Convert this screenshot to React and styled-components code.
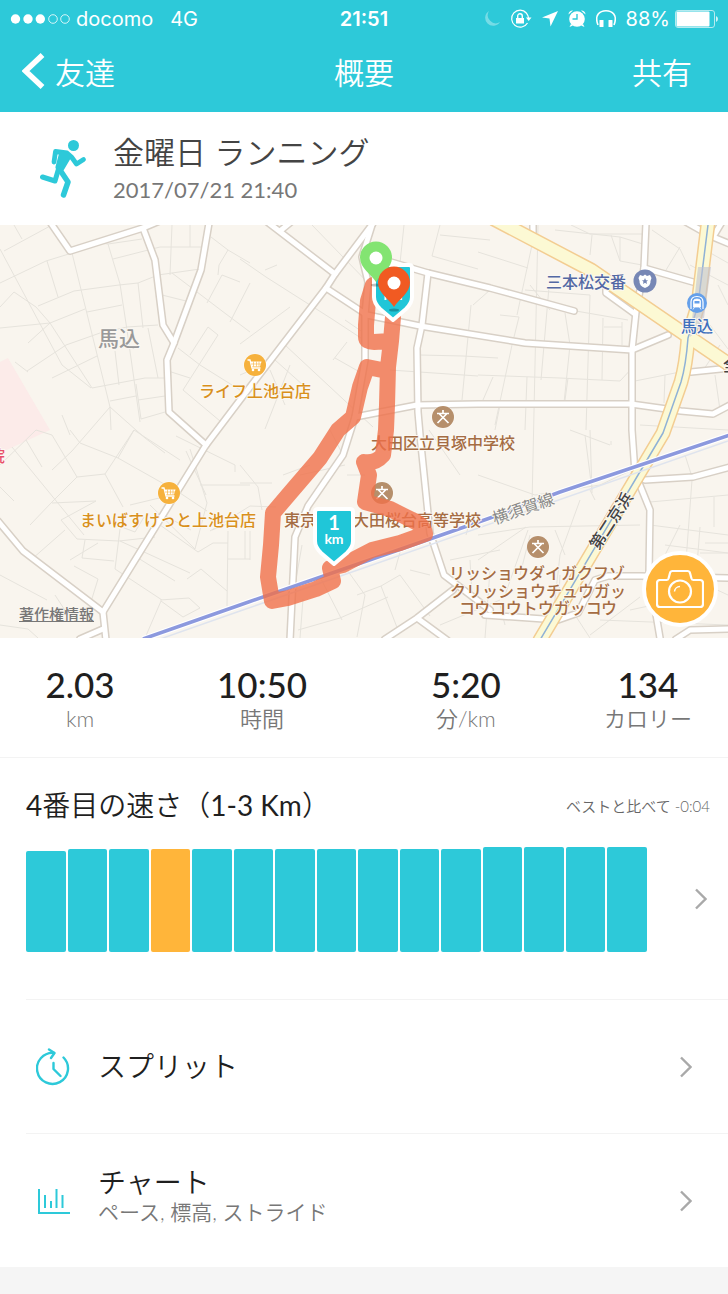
import styled, { createGlobalStyle } from 'styled-components'

const teal = '#2dc9d9'
const orange = '#ffb53a'

/* pace blocks, value = height in px, best = the highlighted one */
const blocks = [
  { value: 101 }, { value: 103 }, { value: 103 }, { value: 103, best: true },
  { value: 103 }, { value: 103 }, { value: 103 }, { value: 103 },
  { value: 103 }, { value: 103 }, { value: 103 },
  { value: 105 }, { value: 105 }, { value: 105 }, { value: 105 },
]

const stats = [
  { value: '2.03', label: 'km' },
  { value: '10:50', label: '時間' },
  { value: '5:20', label: '分/km' },
  { value: '134', label: 'カロリー' },
]

const lanes = [
  'M0 24L62 140L91 163M14 0L22 14M4 26L52 0M0 58L46 36L72 28L100 18L108 19L142 14M0 82L14 67L36 82L50 98L92 163L145 153L165 153',
  'M38 81L74 66L119 60L138 58L158 50L200 44M108 19L120 59L127 105L140 197M72 28L110 182L111 205M47 36L58 72M87 87L122 80M113 34L160 22L201 22',
  'M0 103L50 98L85 84M28 118L50 98M27 146L66 120L100 108L127 102L158 100M52 153L97 131M148 103L158 153M138 58L143 103M115 126L119 160M15 137L28 147',
  'M170 50L172 0M162 70L186 76M172 48L226 89L250 107M230 97L250 58M207 78L222 50L240 57M218 50L219 40L228 25L211 12M228 25L250 38M190 0V22',
  'M110 176L136 171M136 159L141 194L165 187M138 175L165 171M110 182L72 226L52 245M110 182L145 213L165 228M62 190L70 210M165 145L190 153M190 130L208 102L218 110L183 165L220 196',
  'M178 123L200 140L240 165M0 240L36 205L52 210L77 252L52 277L30 300M12 222L84 310M26 215L42 242M0 262L14 276M70 205L80 218L118 233L180 268M105 249L134 205M105 249L123 282M77 252L105 249M118 233L134 205L180 235',
  'M52 278L96 276L61 295M61 295L77 314L119 316L155 312M85 315L82 333L114 336M120 304L115 344L162 375M74 341L98 354L90 380M65 305L32 334M120 316L190 348M138 333L175 356M119 301L135 307L144 292M130 280L180 268L207 286',
  'M176 211L235 240V247M190 224L207 278L195 324L150 280M200 260H250M160 300L198 327L213 318H228M228 306L227 381M187 354L201 344L227 366M228 334H250M245 306V334M160 375L189 373L200 383L183 392L161 376L145 413M70 335L98 318M47 375L0 350M55 370L68 390M0 400L28 404L38 413M212 305L250 290M186 226L206 270M162 289L191 305',
  'M210 306L250 281L276 282M240 240L258 262L262 285M240 258H272M250 306V335M283 250L310 240M302 320L295 360M345 342L365 370L357 412M357 370L381 361L398 405M381 361L400 350L430 391M320 352L342 395M298 405L340 393L388 372M303 374L300 413M300 300L316 290M312 0L375 65M240 34L266 52L332 94L367 117M265 45L277 40M240 119L290 82M285 120L373 202M345 95L367 110M333 135L347 117M265 204L290 140M240 150L275 135L303 160M270 145L285 180M335 133L365 150',
  'M400 38L404 0M432 31L440 0M432 31L478 44M440 10L490 15M473 80L490 65M471 80L462 175M420 130L463 131L498 133M390 145L478 151M429 205L460 250M330 205L343 230M347 250H365M300 250L345 240M395 345L402 320M410 345L430 350M450 335L500 325M470 335L472 370M466 310L470 295M440 400L500 375',
  'M478 27L528 43M525 65L590 70M500 90L519 92L512 120L495 200M483 175L493 152M532 20L517 90M549 62L541 155M555 5L620 12L646 20M592 10L590 30M611 10L620 36L642 40M620 12V36M590 70L586 205M565 88L570 120L564 178M603 93L602 155M628 95L570 85M622 97V120M604 102H622M550 85L530 60M571 0L590 9H644M652 5L680 24L690 45M680 22L663 50M478 150L560 153L620 156L635 140M527 152L525 205M568 153L565 175M635 156L680 147M665 150L664 178M690 40L728 60M700 22L728 38M718 60L728 80M710 100L728 124M715 150L720 185M640 200L728 205M700 150L720 120M500 180L495 205',
  'M538 0L532 280M478 250L535 270L600 260L632 245M590 205L592 268M570 205L610 220M611 216V220M585 210L592 265M478 310L530 302L640 300M526 302L478 335M555 305L565 330M528 305L505 370M530 310L520 350M590 265L595 275M580 275L560 330L552 400M685 230L692 252M692 255L685 350M650 277L728 270M714 272V302M650 300L728 310M700 302L697 340M705 318H728M700 328H728M685 350L728 370M665 320L728 328M630 385L700 370M600 395L728 400M490 345L485 413M560 350L558 390M500 380L505 400M575 390L590 413M680 300L660 340M590 410L640 372',
]

const streets = [
  'M50 -3L70 26L143 3L162 -5',
  'M143 3L155 35L163 100L174 118',
  'M209 -2L201 45L174 118L167 135L169 187L206 220',
  'M374 -3L335 49L326 63L240 175L206 220L103 387L106 415',
  'M-2 296L23 326L103 387M103 404L80 414',
  'M266 -4L335 49M291 -3L280 6M326 63L367 90L420 101L525 118L632 125L668 110',
  'M372 0L362 32L368 57L365 90L365 135L355 192L343 230L308 281L295 312L290 415',
  'M384 35L428 48L490 63L574 86',
  'M428 48L422 100L417 123L418 187L420 210L430 308L444 350L490 385',
  'M355 192L417 180L478 179H631L681 186L713 189L730 180',
  'M646 -2L644 43L636 87L632 125V205L635 248L650 285L649 348L660 413',
  'M644 43L693 57M606 60V68L635 89M691 147L730 143M686 -3L702 6M722 -3L713 12L730 19M533 -2V10',
  'M385 414L417 393L453 365M417 393L447 415',
  'M485 390L558 395L578 388L595 355L608 351H641L730 353',
  'M645 255L693 252L730 242M676 414L690 405L730 404',
]

const highways = [
  'M494 -6L591 45L686 110L730 140',
  'M708 -2L698 80L688 113Q686 140 681 157L663 208L641 245L540 415',
]

const route = 'M373 60L368 76L366 100L366 112Q366 117 374 117L391 116M393 92L391 116L388 142L387 180L386 205L383 230Q375 239 364 237L369 250L365 277L390 284L412 295Q424 300 425 309L400 318L372 325L343 340L330 343L333 356L316 364L288 373L272 376L268 352L271 320L273 288L290 268L320 233L338 205L353 192L360 162L367 142L387 146'

const places = [
  { x: 586, y: 63, text: '三本松交番', color: '#5368a4' },
  { x: 697, y: 107, text: '馬込', color: '#3f6fbd' },
  { x: 255, y: 172, text: 'ライフ上池台店', color: '#d9901c' },
  { x: 168, y: 301, text: 'まいばすけっと上池台店', color: '#d9901c' },
  { x: 443, y: 224, text: '大田区立貝塚中学校', color: '#a56c43' },
  { x: 300, y: 301, text: '東京', color: '#a56c43' },
  { x: 417, y: 301, text: '大田桜台高等学校', color: '#a56c43' },
  { x: 537, y: 354, text: 'リッショウダイガクフゾ', color: '#a56c43' },
  { x: 538, y: 372, text: 'クリッショウチュウガッ', color: '#a56c43' },
  { x: 538, y: 389, text: 'コウコウトウガッコウ', color: '#a56c43' },
]

const Chevron = () => (
  <svg width="12" height="22" viewBox="0 0 12 22" fill="none" stroke="#a9a9a9" strokeWidth="2.4">
    <path d="M1 1.5L10.5 11L1 20.5" />
  </svg>
)

const Cart = ({ x, y }) => (
  <g transform={`translate(${x} ${y})`}>
    <circle r="11.5" fill="#fff" opacity="0.6" />
    <circle r="11" fill="#f6b13c" />
    <path d="M-7.500 -5H-5L-3 3H5.500" fill="none" stroke="#fff" strokeWidth="1.300" />
    <path d="M-4.500 -3.500H6.500L5 1.500H-3.500Z" fill="#fff" />
    <path d="M-1.500 -3.500V1.500M1.500 -3.500V1.500M4 -3.500V1.500M-4 -1H6" stroke="#f6b13c" strokeWidth="0.600" />
    <circle cx="-2" cy="5" r="1.300" fill="#fff" />
    <circle cx="4" cy="5" r="1.300" fill="#fff" />
  </g>
)

const School = ({ x, y }) => (
  <g transform={`translate(${x} ${y})`}>
    <circle r="11.5" fill="#fff" opacity="0.6" />
    <circle r="11" fill="#b68f6b" />
    <path d="M0 -7V-4M-6 -3.500H6M-3.500 -3L5.500 6M3.500 -3L-5.500 6" fill="none" stroke="#fff" strokeWidth="1.700" />
  </g>
)

const Pin = ({ x, y, fill }) => (
  <g transform={`translate(${x} ${y})`}>
    <ellipse cy="27" rx="5" ry="1.500" fill="#000" opacity="0.25" />
    <path d="M0 24C-5 16 -16 10 -16 -0.500A16 16 0 0 1 16 -0.500C16 10 5 16 0 24Z" fill={fill} />
    <circle r="6.500" fill="#fff" />
  </g>
)

const Shield = ({ x, y, km }) => (
  <g transform={`translate(${x} ${y})`}>
    <path
      d="M-16 -27H16Q19 -27 19 -24V5Q19 11 13 17L0 28L-13 17Q-19 11 -19 5V-24Q-19 -27 -16 -27Z"
      fill="#20c6d8" stroke="#fff" strokeWidth="4" strokeLinejoin="round"
    />
    <PinText y="-6" $size={20}>{km}</PinText>
    <PinText y="8" $size={14}>km</PinText>
  </g>
)

const RunMap = () => (
  <MapDrawing viewBox="0 0 728 413" preserveAspectRatio="xMidYMid slice">
    <rect width="728" height="413" fill="#f9f5ee" />
    <path d="M0 137L8 133L50 205L0 228Z" fill="#fcebe9" />
    <g fill="none" stroke="#e6e3dc" strokeWidth="1">
      {lanes.map(d => <path key={d} d={d} />)}
    </g>
    <g fill="none" strokeLinejoin="round" strokeLinecap="round">
      {streets.map(d => <path key={d} d={d} stroke="#d8d0c6" strokeWidth="8" />)}
      {streets.map(d => <path key={d} d={d} stroke="#fff" strokeWidth="5" />)}
      {highways.map(d => <path key={d} d={d} stroke="#f3cd92" strokeWidth="15" />)}
      {highways.map(d => <path key={d} d={d} stroke="#fcf9d4" strokeWidth="12" />)}
      <path d="M708 0L698 80L688 113Q686 140 681 157L663 208L641 245L540 415" stroke="#8fb2d6" strokeWidth="1.500" />
    </g>
    <path d="M698 42H711L703 100L690 112Z" fill="#bfc2d0" opacity="0.6" />
    <path d="M146 419L240 386L728 216" stroke="#dfe4ee" strokeWidth="1.500" fill="none" />
    <path d="M143 414L240 380L430 314L490 293L560 267L730 210" stroke="#fff" strokeWidth="6" fill="none" />
    <path d="M143 414L240 380L430 314L490 293L560 267L730 210" stroke="#8c99de" strokeWidth="3.500" fill="none" />

    <Cart x={255} y={140} />
    <Cart x={169} y={268} />
    <School x={443} y={192} />
    <School x={382} y={268} />
    <School x={538} y={322} />
    <g transform="translate(645 56)">
      <circle r="11.500" fill="#7787b5" />
      <path d="M-5 -6L-2 -5L0 -6.500L2 -5L5 -6L6.500 -3L5.500 0Q6 5 0 7Q-6 5 -5.500 0L-6.500 -3Z" fill="#fff" />
      <path d="M0 -3L1 -0.800L3 -0.800L1.500 0.800L2 3L0 1.800L-2 3L-1.500 0.800L-3 -0.800L-1 -0.800Z" fill="#7787b5" />
    </g>
    <g transform="translate(697 78)">
      <circle r="10" fill="#65a0ea" />
      <path d="M-6 6V-1Q-6 -6.500 0 -6.500T6 -1V6" fill="none" stroke="#fff" strokeWidth="1.200" />
      <path d="M-3.500 -2Q-3.500 -4 0 -4T3.500 -2V4H-3.500ZM-2.500 4L-4 6.500M2.500 4L4 6.500" fill="#fff" stroke="#fff" strokeWidth="0.800" />
      <path d="M-2.500 -2H2.500V0.500H-2.500Z" fill="#65a0ea" />
    </g>

    {places.map(p => <MapText key={p.text + p.y} x={p.x} y={p.y} $color={p.color}>{p.text}</MapText>)}
    <MapText x="119" y="121" $color="#999" $size={21}>馬込</MapText>
    <MapText x="-3" y="237" $color="#e8506a">院</MapText>
    <MapText x="731" y="146" $color="#444">全</MapText>
    <MapText $color="#888" $weight={400} transform="translate(525 289) rotate(-19)">横須賀線</MapText>
    <MapText $color="#444" transform="translate(616 299) rotate(-57)">第二京浜</MapText>

    <path d={route} fill="none" stroke="#f0714a" strokeOpacity="0.8" strokeWidth="16" strokeLinejoin="round" strokeLinecap="round" />
    <Shield x={393} y={67} km="2" />
    <Pin x={376} y={33} fill="#83e472" />
    <Pin x={394} y={58} fill="#f15a22" />
    <Shield x={334} y={311} km="1" />
  </MapDrawing>
)

export default function App() {
  return (
    <Page>
      <GlobalStyle />
      <Header>
        <StatusBar>
          <StatusSide>
            <svg width="61" height="12" viewBox="0 0 61 12" fill="#fff">
              <circle cx="5.500" cy="6" r="4.700" />
              <circle cx="18" cy="6" r="4.700" />
              <circle cx="30.300" cy="6" r="4.700" />
              <g fill="none" stroke="#fff" strokeWidth="0.800">
                <circle cx="43" cy="6" r="4.300" />
                <circle cx="55" cy="6" r="4.300" />
              </g>
            </svg>
            <span>docomo</span>
            <Network>4G</Network>
          </StatusSide>
          <Time>21:51</Time>
          <StatusSide $end>
            <svg width="108" height="20" viewBox="0 0 108 20" fill="#fff">
              <path d="M6 2A8 8 0 1 0 17 13A8 8 0 0 1 6 2Z" opacity="0.35" />
              <g transform="translate(28 0)">
                <path d="M15.500 4A8.500 8.500 0 1 0 16.500 14M13 2.500A8.500 8.500 0 0 1 17.500 9" fill="none" stroke="#fff" strokeWidth="1.200" />
                <path d="M15 8.500H20.500L17.700 12Z" />
                <path d="M5 9H13V14.500H5Z" />
                <path d="M6.700 9V7A2.300 2.300 0 0 1 11.300 7V9" fill="none" stroke="#fff" strokeWidth="1.400" />
              </g>
              <path d="M75 2L59 8.500L66.500 9.500L67.500 17.500Z" />
              <g transform="translate(94 10)">
                <circle r="7.800" />
                <path d="M-8.500 -4.500A4 4 0 0 1 -4 -8.500ZM8.500 -4.500A4 4 0 0 0 4 -8.500ZM-6 5L-7.500 8L-4 6.500ZM6 5L7.500 8L4 6.500Z" />
                <path d="M0 -5V0H-4.500" fill="none" stroke={teal} strokeWidth="1.400" />
              </g>
            </svg>
            <svg width="20" height="20" viewBox="0 0 20 20" fill="#fff">
              <path d="M2 16C-2 6 4 1.700 10 1.700S22 6 18 16" fill="none" stroke="#fff" strokeWidth="1.600" />
              <rect x="3.500" y="11" width="4" height="7" rx="0.500" />
              <rect x="12.500" y="11" width="4" height="7" rx="0.500" />
            </svg>
            <Percent>88%</Percent>
            <svg width="43" height="18" viewBox="0 0 43 18">
              <rect x="0.500" y="0.500" width="39" height="17" rx="2.500" fill="none" stroke="#b5ebf0" />
              <rect x="1.500" y="1.500" width="33" height="15" rx="1" fill="#fff" />
              <path d="M41 6Q43 7 43 9T41 12Z" fill="#d5f3f6" />
            </svg>
          </StatusSide>
        </StatusBar>
        <NavBar>
          <NavButton>
            <BackArrow width="23" height="36" viewBox="0 0 23 36" fill="none" stroke="#fff" strokeWidth="5.500">
              <path d="M20.500 2L3.500 18L20.500 34" />
            </BackArrow>
            友達
          </NavButton>
          <NavTitle>概要</NavTitle>
          <NavButton $end>共有</NavButton>
        </NavBar>
      </Header>

      <Summary>
        <svg width="47" height="58" viewBox="0 0 47 58" fill="none" stroke={teal} strokeLinecap="round" strokeLinejoin="round">
          <circle cx="33.500" cy="5.500" r="5.500" fill={teal} stroke="none" />
          <path d="M14 22L15.500 11.500L27 13L31.500 17L36.500 24L43.500 19.500" strokeWidth="4.800" />
          <path d="M22 14L28 17L21.500 28L18.500 27Z" strokeWidth="6" fill={teal} />
          <path d="M18.500 29L15 41L2.500 37" strokeWidth="5" />
          <path d="M20 30L28 42L23.500 55" strokeWidth="5.500" />
        </svg>
        <div>
          <RunTitle>金曜日 ランニング</RunTitle>
          <RunDate>2017/07/21 21:40</RunDate>
        </div>
      </Summary>

      <MapBox>
        <RunMap />
        <Legal href="#legal">著作権情報</Legal>
        <CameraButton aria-label="写真を追加">
          <svg width="48" height="40" viewBox="0 0 48 40" fill="none" stroke="#fff" strokeWidth="2.200" strokeLinejoin="round">
            <path d="M3 11H10.500Q12 11 12.500 9.500L14 4Q14.500 2 16.500 2H31.500Q33.500 2 34 4L35.500 9.500Q36 11 37.500 11H44Q47 11 47 14V35Q47 38 44 38H4Q1 38 1 35V14Q1 11 4 11Z" />
            <circle cx="24" cy="22.500" r="11" />
            <path d="M18.500 22.500A5.500 5.500 0 0 1 24 17.500" strokeWidth="1.500" />
          </svg>
        </CameraButton>
      </MapBox>

      <Stats>
        {stats.map(s => (
          <Stat key={s.label}>
            <StatValue>{s.value}</StatValue>
            <StatLabel>{s.label}</StatLabel>
          </Stat>
        ))}
      </Stats>

      <Pace>
        <PaceHead>
          <PaceTitle><b>4</b>番目の速さ（<b>1-3 Km</b>）</PaceTitle>
          <PaceNote>ベストと比べて -0:04</PaceNote>
        </PaceHead>
        <PaceBody>
          <Blocks>
            {blocks.map((b, i) => <Block key={i} $best={b.best} style={{ height: b.value }} />)}
          </Blocks>
          <MoreButton aria-label="詳細"><Chevron /></MoreButton>
        </PaceBody>
      </Pace>

      <List>
        <Row href="#splits">
          <RowIcon>
            <svg width="35" height="38" viewBox="0 0 35 38" fill="none" stroke={teal} strokeWidth="2.400" strokeLinecap="round" strokeLinejoin="round">
              <path d="M27.500 9.500A15.500 15.500 0 1 1 18 5" />
              <path d="M13 1.500L18.500 5L15 10M17.500 15V21L24.500 28" />
            </svg>
          </RowIcon>
          <RowText>
            <RowTitle>スプリット</RowTitle>
          </RowText>
          <Chevron />
        </Row>
        <Row href="#chart">
          <RowIcon>
            <svg width="35" height="28" viewBox="0 0 35 28" fill="none" stroke={teal} strokeWidth="2">
              <path d="M3 2V26H34M9 8V21M15 14V21M20.500 2V21M26.500 8V21" />
            </svg>
          </RowIcon>
          <RowText>
            <RowTitle>チャート</RowTitle>
            <RowSub>ペース, 標高, ストライド</RowSub>
          </RowText>
          <Chevron />
        </Row>
      </List>
    </Page>
  )
}

const GlobalStyle = createGlobalStyle`
  * { box-sizing: border-box; }
  body {
    margin: 0;
    background: #f5f5f5;
    font-family: Lato, 'Noto Sans CJK JP', sans-serif;
    font-weight: 350;
    color: #1f1f1f;
  }
  button {
    border: 0;
    padding: 0;
    background: none;
    font: inherit;
    color: inherit;
  }
  svg { display: block; flex: none; }
`

const Page = styled.main`
  min-height: 100vh;
`

const Header = styled.header`
  height: 112px;
  background: ${teal};
  color: #fff;
`

const StatusBar = styled.div`
  display: grid;
  grid-template-columns: 1fr auto 1fr;
  align-items: center;
  height: 37px;
  padding: 0 10px;
  font-family: Inter, sans-serif;
  font-size: 20px;
  font-weight: 400;
`

const StatusSide = styled.div`
  display: flex;
  align-items: center;
  justify-content: ${p => p.$end ? 'flex-end' : 'flex-start'};
  gap: 5px;
`

const Network = styled.span`
  margin-left: 12px;
`

const Time = styled.span`
  font-weight: 600;
`

const Percent = styled.span`
  margin-left: 5px;
`

const NavBar = styled.nav`
  display: grid;
  grid-template-columns: 1fr auto 1fr;
  align-items: center;
  height: 68px;
  padding: 0 36px;
  font-size: 30px;
`

const NavButton = styled.button`
  display: flex;
  align-items: center;
  justify-self: ${p => p.$end ? 'end' : 'start'};
  gap: 10px;
`

const BackArrow = styled.svg`
  margin-left: -14px;
`

const NavTitle = styled.h1`
  margin: 0;
  font-size: 30px;
  font-weight: 350;
`

const Summary = styled.section`
  display: flex;
  align-items: center;
  gap: 26px;
  height: 113px;
  padding: 0 40px;
  background: #fff;
`

const RunTitle = styled.h2`
  margin: 0;
  font-size: 31px;
  line-height: 42px;
  font-weight: 350;
  color: #444;
`

const RunDate = styled.div`
  font-size: 22px;
  line-height: 34px;
  font-weight: 400;
  color: #777;
`

const MapBox = styled.section`
  position: relative;
  height: 413px;
`

const MapDrawing = styled.svg`
  width: 100%;
  height: 100%;
`

const MapText = styled.text`
  font-family: 'Noto Sans CJK JP', sans-serif;
  font-size: ${p => p.$size || 16}px;
  font-weight: ${p => p.$weight || 500};
  fill: ${p => p.$color};
  stroke: #fbf8f2;
  stroke-width: 2px;
  paint-order: stroke;
  text-anchor: middle;
`

const PinText = styled.text`
  font-family: Lato, sans-serif;
  font-size: ${p => p.$size}px;
  font-weight: 700;
  fill: #fff;
  text-anchor: middle;
`

const Legal = styled.a`
  position: absolute;
  left: 19px;
  bottom: 14px;
  font-size: 15px;
  font-weight: 500;
  color: #777;
`

const CameraButton = styled.button`
  position: absolute;
  right: 10px;
  bottom: 11px;
  display: flex;
  align-items: center;
  justify-content: center;
  width: 76px;
  height: 76px;
  border: 4px solid #fff;
  border-radius: 50%;
  background: ${orange};
`

const Stats = styled.section`
  display: grid;
  grid-template-columns: 22fr 28fr 28fr 22fr;
  height: 120px;
  padding-top: 24px;
  border-bottom: 1px solid #f3f3f3;
  background: #fff;
  text-align: center;
`

const Stat = styled.div``

const StatValue = styled.div`
  font-size: 35px;
  line-height: 44px;
  font-weight: 500;
`

const StatLabel = styled.div`
  font-size: 22px;
  line-height: 26px;
  color: #777;
`

const Pace = styled.section`
  height: 241px;
  padding: 26px 18px 0 26px;
  background: #fff;
`

const PaceHead = styled.div`
  display: flex;
  align-items: center;
  justify-content: space-between;
`

const PaceTitle = styled.h3`
  margin: 0;
  font-size: 28px;
  line-height: 42px;
  font-weight: 350;

  & > b {
    font-weight: 400;
  }
`

const PaceNote = styled.span`
  font-size: 15px;
  color: #666;
`

const PaceBody = styled.div`
  display: flex;
  align-items: center;
  margin-top: 20px;
`

const Blocks = styled.div`
  display: flex;
  flex: 1;
  align-items: flex-end;
  gap: 2px;
  height: 106px;
`

const Block = styled.div`
  flex: 1;
  border-radius: 2px;
  background: ${p => p.$best ? orange : teal};
`

const MoreButton = styled.button`
  display: flex;
  justify-content: flex-end;
  width: 63px;
  padding-right: 3px;
`

const List = styled.nav`
  padding-left: 26px;
  background: #fff;
`

const Row = styled.a`
  display: flex;
  align-items: center;
  height: 134px;
  padding-right: 36px;
  border-top: 1px solid #f3f3f3;
  color: inherit;
  text-decoration: none;
`

const RowIcon = styled.span`
  width: 72px;
  padding-left: 10px;
`

const RowText = styled.span`
  flex: 1;
  padding-bottom: 2px;
`

const RowTitle = styled.span`
  display: block;
  font-size: 28px;
  line-height: 32px;
`

const RowSub = styled.span`
  display: block;
  padding-bottom: 8px;
  font-size: 21px;
  line-height: 28px;
  color: #777;
`
